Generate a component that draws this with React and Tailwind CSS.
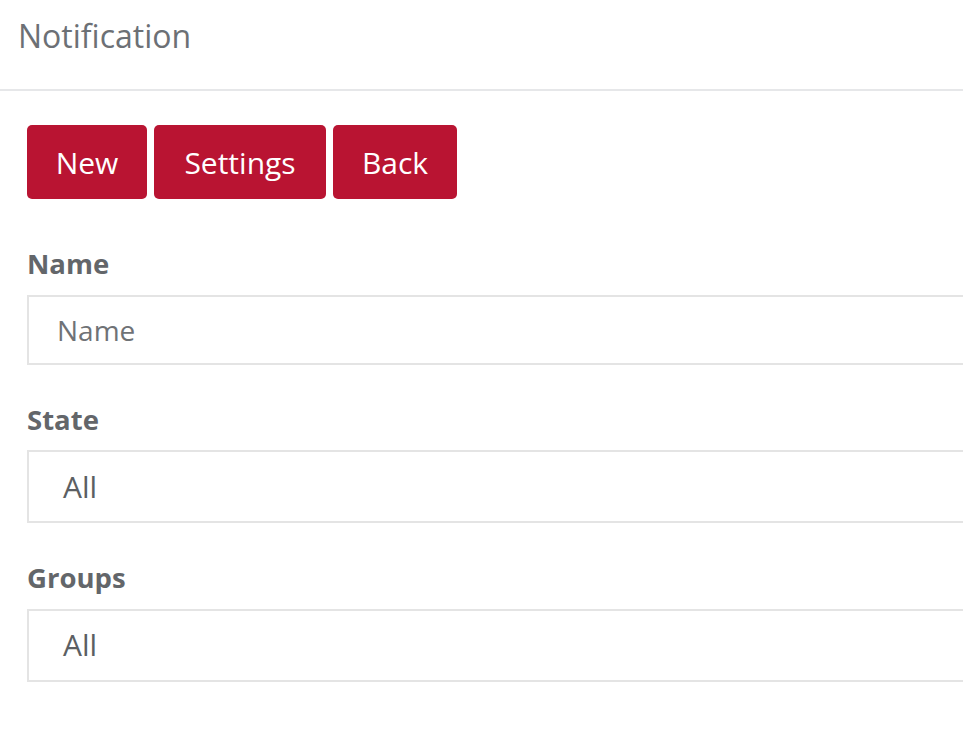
import React from "react";

function Field({ label, children }) {
  return (
    <div className="mb-[41px]">
      <div className="text-[27.5px] leading-none font-bold text-[#63666a] mb-[17px]">{label}</div>
      {children}
    </div>
  );
}

export default function App() {
  return (
    <div className="w-[963px] h-[735px] overflow-hidden bg-white" style={{ fontFamily: '"Open Sans", sans-serif' }}>
      <div className="h-[91px] border-b-2 border-[#e6e7e9] pl-[18px] pt-[20px]">
        <div className="text-[32px] leading-none text-[#6c7075]">Notification</div>
      </div>
      <div className="pl-[27px] pt-[34px] w-[1100px]">
        <div className="flex gap-[7px] mb-[51px]">
          <button className="h-[74px] w-[120px] rounded-[5px] bg-[#b91432] text-white text-[30px]">New</button>
          <button className="h-[74px] w-[172px] rounded-[5px] bg-[#b91432] text-white text-[30px]">Settings</button>
          <button className="h-[74px] w-[124px] rounded-[5px] bg-[#b91432] text-white text-[30px]">Back</button>
        </div>
        <Field label="Name">
          <div className="h-[70px] border-2 border-[#e4e4e4] flex items-center pl-[28px] text-[28px] leading-none text-[#6f7276]">
            Name
          </div>
        </Field>
        <Field label="State">
          <div className="h-[73px] border-2 border-[#e4e4e4] flex items-center pl-[34px] text-[30px] leading-none text-[#5c5f63]">
            All
          </div>
        </Field>
        <Field label="Groups">
          <div className="h-[73px] border-2 border-[#e4e4e4] flex items-center pl-[34px] text-[30px] leading-none text-[#5c5f63]">
            All
          </div>
        </Field>
      </div>
    </div>
  );
}
